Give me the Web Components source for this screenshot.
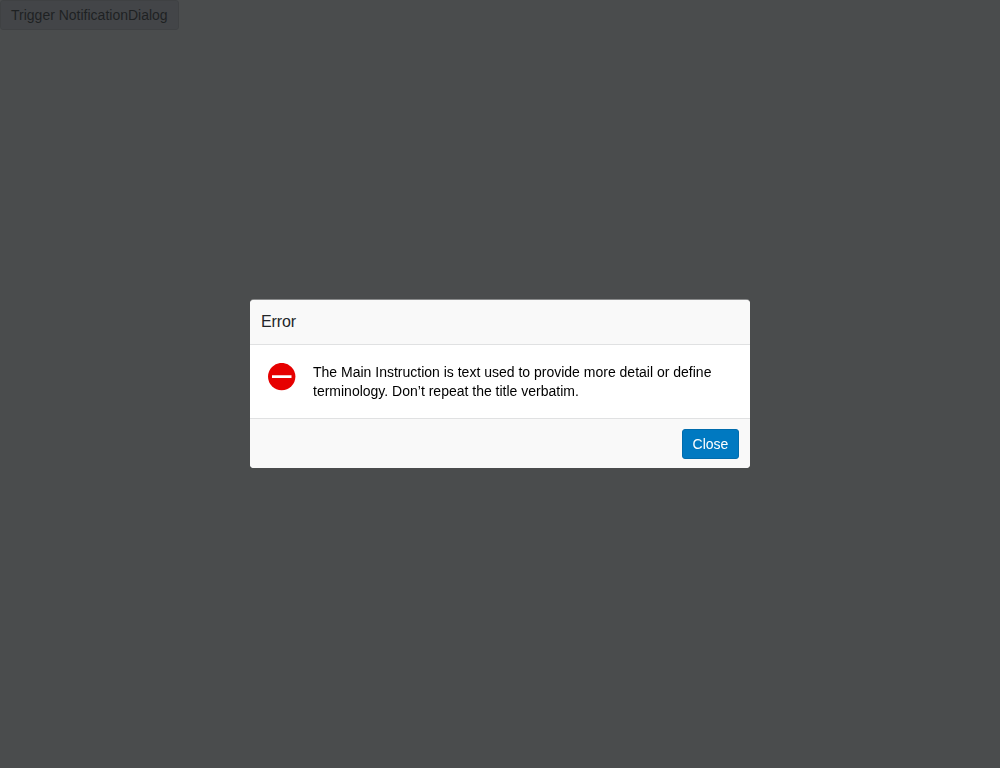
<!DOCTYPE html>
<html lang="en">
<head>
<meta charset="utf-8">
<title>Notification dialog</title>
<style>
html,body{margin:0;height:100%;overflow:hidden}
body{font:14px/20px "Liberation Sans",Arial,sans-serif;background:#fff;color:#000}
</style>
</head>
<body>
<ui-button>Trigger NotificationDialog</ui-button>
<notification-dialog>
  <span slot="title">Error</span>
  The Main Instruction is text used to provide more detail or define terminology. Don’t repeat the title verbatim.
  <ui-button slot="footer" primary>Close</ui-button>
</notification-dialog>
<script>
class UiButton extends HTMLElement {
  constructor() {
    super();
    this.attachShadow({mode: 'open'}).innerHTML = `
      <style>
        :host{display:inline-block;vertical-align:top}
        button{display:block;box-sizing:border-box;height:30px;margin:0;padding:0 10px;border:1px solid #c0c2c9;border-radius:3px;
          background:#d6d9e2;color:#101114;font:14px/28px "Liberation Sans",Arial,sans-serif;white-space:nowrap}
        :host([primary]) button{padding:0 9.6px;background:#0079c1;border-color:#006cad;color:#fff}
      </style>
      <button type="button"><slot></slot></button>`;
  }
}
customElements.define('ui-button', UiButton);

class ErrorIcon extends HTMLElement {
  constructor() {
    super();
    this.attachShadow({mode: 'open'}).innerHTML = `
      <style>:host{display:block;width:28px;height:28px;flex:none}svg{display:block}</style>
      <svg width="28" height="28" viewBox="0 0 28 28"><circle cx="13.7" cy="13.6" r="13.7" fill="#e60000"/><path d="M4 12.2h19.5v2.7H4z" fill="#fff"/></svg>`;
  }
}
customElements.define('error-icon', ErrorIcon);

class NotificationDialog extends HTMLElement {
  constructor() {
    super();
    this.attachShadow({mode: 'open'}).innerHTML = `
      <style>
        :host{position:fixed;inset:0;display:flex;align-items:center;justify-content:center;background:rgba(34,36,38,.82)}
        section{display:flex;flex-direction:column;box-sizing:border-box;width:500px;height:168px;border-radius:4px;overflow:hidden;background:#fff;
          box-shadow:0 -1px 0 rgba(255,255,255,.35)}
        header{box-sizing:border-box;height:45px;padding:12px 11px;border-bottom:1px solid #e0e1e2;background:#f9f9f9;
          color:#222529;font-size:16px;line-height:20px;letter-spacing:-.1px}
        main{display:flex;flex:1;gap:17px;padding:18px 18px 0;line-height:19px}
        .message{flex:1}
        footer{display:flex;justify-content:flex-end;box-sizing:border-box;height:50px;padding:10px 11px;border-top:1px solid #e0e1e2;background:#f9f9f9}
      </style>
      <section role="dialog" aria-modal="true">
        <header><slot name="title"></slot></header>
        <main><error-icon></error-icon><div class="message"><slot></slot></div></main>
        <footer><slot name="footer"></slot></footer>
      </section>`;
  }
}
customElements.define('notification-dialog', NotificationDialog);
</script>
</body>
</html>
